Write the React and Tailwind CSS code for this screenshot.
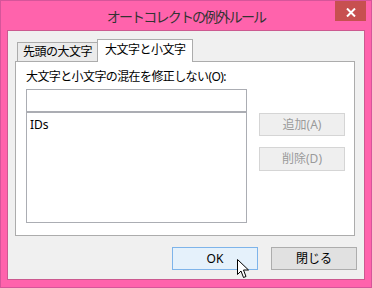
import React from 'react';

const jp = { fontFamily: '"Noto Sans", "Noto Sans CJK JP", sans-serif' };

function Btn({ children, className }) {
  return (
    <div className={`flex h-[23px] w-[86px] items-center justify-center border text-[12px] leading-none ${className}`}>
      {children}
    </div>
  );
}

function Cursor() {
  return (
    <svg className="absolute left-[236px] top-[258px]" width="13" height="20" viewBox="0 0 13 20">
      <path d="M0.5 0.5 L0.5 15.5 L4 12 L6.5 18.5 L9 17.5 L6.5 11 L11.5 11 Z" fill="#fff" stroke="#000" strokeWidth="1" strokeLinejoin="miter" />
    </svg>
  );
}

export default function App() {
  return (
    <div className="relative flex h-[288px] w-[372px] flex-col border border-[#d6559a] bg-[#ff63ac]" style={jp}>
      <div className="relative flex h-[29px] justify-center pt-[6px]">
        <span className="text-[14px] leading-[20px] tracking-[-1.8px] text-[#333]">オートコレクトの例外ルール</span>
        <div className="absolute right-[5px] top-0 flex h-[20px] w-[31px] items-center justify-center bg-[#c75050]">
          <svg width="10" height="9" viewBox="0 0 10 9" className="mt-[2px]">
            <path d="M1 0.5 L9 8.5 M9 0.5 L1 8.5" stroke="#fff" strokeWidth="2" />
          </svg>
        </div>
      </div>

      <div className="ml-[6px] flex h-[250px] w-[358px] flex-col border border-[#cc5a90] bg-[#f0f0f0]">
        <div className="flex h-[30px] items-end pl-[9px]">
          <div className="flex h-[19px] w-[80px] items-center border-l border-t border-[#acacac] bg-[#ebebeb] pl-[5px] text-[12px] leading-none tracking-[-0.5px] text-[#000]">
            先頭の大文字
          </div>
          <div className="relative z-10 -mb-px flex h-[23px] w-[96px] items-start border-l border-r border-t border-[#acacac] bg-white pl-[7px] pt-[4px] text-[12px] leading-none tracking-[-0.5px] text-[#000]">
            大文字と小文字
          </div>
        </div>

        <div className="ml-[7px] flex h-[175px] w-[340px] border border-[#acacac] bg-white pl-[10px] pt-[7px]">
          <div className="flex w-[221px] flex-col">
            <div className="whitespace-nowrap text-[12px] leading-[16px] tracking-[-0.6px] text-[#000]">
              大文字と小文字の混在を修正しない(O):
            </div>
            <div className="mt-[4px] h-[23px] border border-[#abadb3] bg-white" />
            <div className="h-[111px] border border-[#abadb3] bg-white pl-[3px] pt-[4px] text-[12px] leading-[16px] text-[#000]">
              IDs
            </div>
          </div>
          <div className="ml-[12px] flex flex-col gap-[11px] pt-[44px]">
            <Btn className="border-[#d5d5d5] bg-[#efefef] text-[#9a9a9a]">追加(A)</Btn>
            <Btn className="h-[24px] border-[#d5d5d5] bg-[#efefef] text-[#9a9a9a]">削除(D)</Btn>
          </div>
        </div>

        <div className="mt-[11px] flex justify-end gap-[13px] pr-[7px]">
          <Btn className="border-[#7eb4ea] bg-[#e5f1fb] text-[#000]">OK</Btn>
          <Btn className="border-[#adadad] bg-[#e1e1e1] text-[#000]">閉じる</Btn>
        </div>
      </div>
      <Cursor />
    </div>
  );
}
